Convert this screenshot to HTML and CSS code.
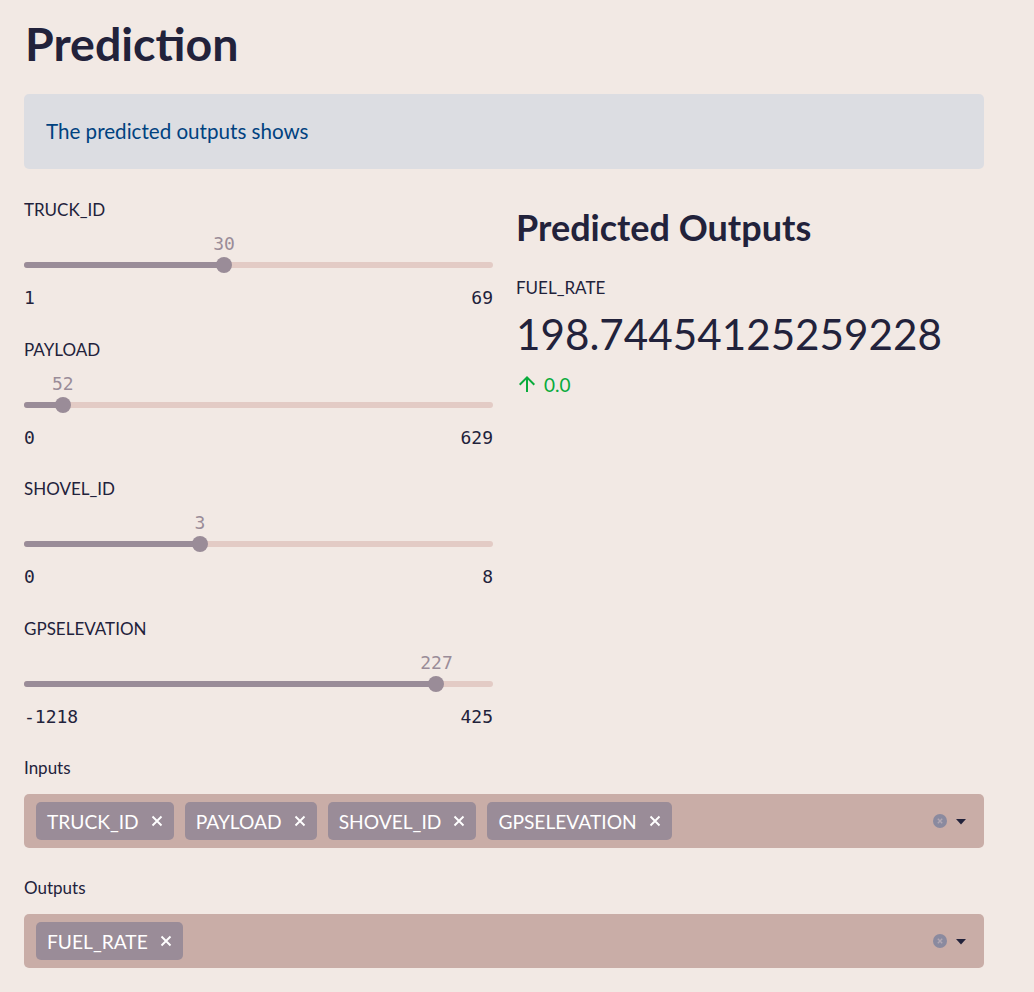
FILE: index.html
```html
<!DOCTYPE html>
<html lang="en">
<head>
<meta charset="utf-8">
<title>Prediction</title>
<link rel="stylesheet" href="styles.css">
</head>
<body>
<main class="main">
  <h1 class="title">Prediction</h1>
  <div class="info">The predicted outputs shows</div>

  <div class="columns">
    <div class="col-left">
      <div class="slider">
        <div class="label">TRUCK_ID</div>
        <div class="track-wrap">
          <div class="track"><div class="fill" style="width:42.65%"></div></div>
          <div class="thumb" style="left:42.65%"></div>
          <div class="value" style="left:42.65%">30</div>
        </div>
        <div class="ticks"><span>1</span><span>69</span></div>
      </div>
      <div class="slider">
        <div class="label">PAYLOAD</div>
        <div class="track-wrap">
          <div class="track"><div class="fill" style="width:8.27%"></div></div>
          <div class="thumb" style="left:8.27%"></div>
          <div class="value" style="left:8.27%">52</div>
        </div>
        <div class="ticks"><span>0</span><span>629</span></div>
      </div>
      <div class="slider">
        <div class="label">SHOVEL_ID</div>
        <div class="track-wrap">
          <div class="track"><div class="fill" style="width:37.5%"></div></div>
          <div class="thumb" style="left:37.5%"></div>
          <div class="value" style="left:37.5%">3</div>
        </div>
        <div class="ticks"><span>0</span><span>8</span></div>
      </div>
      <div class="slider">
        <div class="label">GPSELEVATION</div>
        <div class="track-wrap">
          <div class="track"><div class="fill" style="width:87.95%"></div></div>
          <div class="thumb" style="left:87.95%"></div>
          <div class="value" style="left:87.95%">227</div>
        </div>
        <div class="ticks"><span>-1218</span><span>425</span></div>
      </div>
    </div>

    <div class="col-right">
      <h2 class="subtitle">Predicted Outputs</h2>
      <div class="metric-label">FUEL_RATE</div>
      <div class="metric-value">198.74454125259228</div>
      <div class="metric-delta">
        <svg class="delta-icon" viewBox="0 0 24 24" width="24" height="24"><path d="M4 12l1.41 1.41L11 7.83V20h2V7.83l5.58 5.59L20 12l-8-8-8 8z" fill="currentColor"/></svg>
        <span>0.0</span>
      </div>
    </div>
  </div>

  <div class="field">
    <div class="label">Inputs</div>
    <div class="select">
      <div class="chips">
        <span class="chip">TRUCK_ID<svg class="chip-x" viewBox="0 0 12 12" width="12" height="12"><path d="M1.5 1.5L10.5 10.5M10.5 1.5L1.5 10.5"/></svg></span>
        <span class="chip">PAYLOAD<svg class="chip-x" viewBox="0 0 12 12" width="12" height="12"><path d="M1.5 1.5L10.5 10.5M10.5 1.5L1.5 10.5"/></svg></span>
        <span class="chip">SHOVEL_ID<svg class="chip-x" viewBox="0 0 12 12" width="12" height="12"><path d="M1.5 1.5L10.5 10.5M10.5 1.5L1.5 10.5"/></svg></span>
        <span class="chip">GPSELEVATION<svg class="chip-x" viewBox="0 0 12 12" width="12" height="12"><path d="M1.5 1.5L10.5 10.5M10.5 1.5L1.5 10.5"/></svg></span>
      </div>
      <div class="select-icons">
        <svg class="clear" viewBox="0 0 14 14" width="14" height="14"><circle cx="7" cy="7" r="7" fill="#8a8a9f"/><path d="M4.8 4.8L9.2 9.2M9.2 4.8L4.8 9.2" stroke="#b2a8b3" stroke-width="1.4"/></svg>
        <svg class="caret" viewBox="0 0 10 6" width="10" height="6"><path d="M0 0H10L5 5.5Z" fill="#22223b"/></svg>
      </div>
    </div>
  </div>

  <div class="field">
    <div class="label">Outputs</div>
    <div class="select">
      <div class="chips">
        <span class="chip">FUEL_RATE<svg class="chip-x" viewBox="0 0 12 12" width="12" height="12"><path d="M1.5 1.5L10.5 10.5M10.5 1.5L1.5 10.5"/></svg></span>
      </div>
      <div class="select-icons">
        <svg class="clear" viewBox="0 0 14 14" width="14" height="14"><circle cx="7" cy="7" r="7" fill="#8a8a9f"/><path d="M4.8 4.8L9.2 9.2M9.2 4.8L4.8 9.2" stroke="#b2a8b3" stroke-width="1.4"/></svg>
        <svg class="caret" viewBox="0 0 10 6" width="10" height="6"><path d="M0 0H10L5 5.5Z" fill="#22223b"/></svg>
      </div>
    </div>
  </div>
</main>
</body>
</html>
```
FILE: styles.css
```css
html, body {
  margin: 0;
  padding: 0;
  background: #f2e9e4;
  color: #22223b;
  font-family: Lato, "Noto Sans", sans-serif;
}

.main {
  width: 960px;
  padding: 15px 0 0 24px;
}

.title {
  margin: 0;
  font-size: 46.5px;
  font-weight: 700;
  line-height: 56px;
  padding-left: 1px;
}

.info {
  margin-top: 23px;
  background: #dcdde2;
  border-radius: 5px;
  padding: 20px 22px 20px;
  line-height: 35px;
  font-size: 20.6px;
  color: #004280;
}

.columns {
  display: flex;
  gap: 23px;
  margin-top: 27px;
}

.col-left {
  width: 469px;
  flex: none;
}

.col-right {
  flex: 1;
  padding-top: 9px;
}

.label {
  font-size: 17px;
  line-height: 26px;
  height: 26px;
  padding-top: 1px;
}

.slider {
  height: 139.5px;
}

.track-wrap {
  position: relative;
  height: 63px;
}

.track {
  position: absolute;
  left: 0;
  right: 0;
  top: 39px;
  height: 6px;
  border-radius: 3px;
  background: #e3cbc5;
  overflow: hidden;
}

.fill {
  height: 100%;
  background: #9a8c98;
}

.thumb {
  position: absolute;
  top: 34px;
  width: 16px;
  height: 16px;
  border-radius: 50%;
  background: #9a8c98;
  transform: translateX(-50%);
}

.value {
  position: absolute;
  top: 9px;
  transform: translateX(-50%);
  font-family: "DejaVu Sans Mono", monospace;
  font-size: 18px;
  line-height: 24px;
  color: #9a8c98;
  white-space: nowrap;
}

.ticks {
  display: flex;
  justify-content: space-between;
  font-family: "DejaVu Sans Mono", monospace;
  font-size: 18px;
  line-height: 24px;
  color: #22223b;
}

.subtitle {
  margin: 0;
  font-size: 36px;
  font-weight: 700;
  line-height: 44px;
}

.metric-label {
  margin-top: 26px;
  font-size: 17px;
  line-height: 26px;
}

.metric-value {
  margin-top: 8px;
  font-size: 42.2px;
  line-height: 50px;
}

.metric-delta {
  margin-top: 12px;
  display: flex;
  align-items: center;
  gap: 5px;
  height: 26px;
  font-size: 19px;
  color: #09ab3b;
}

.delta-icon {
  margin-left: -1px;
  width: 24px;
  height: 24px;
}

.field {
  margin-top: 0;
}

.field + .field {
  margin-top: 26px;
}

.field .label {
  margin-bottom: 13px;
}

.select {
  display: flex;
  align-items: center;
  justify-content: space-between;
  background: #c9ada7;
  border-radius: 5px;
  padding: 8px 12px;
  height: 38px;
}

.chips {
  display: flex;
  gap: 11px;
}

.chip {
  display: inline-flex;
  align-items: center;
  gap: 12px;
  height: 38px;
  padding: 0 11px 0 11px;
  background: #9a8c98;
  color: #fff;
  border-radius: 5px;
  font-size: 19.2px;
}

.chip-x {
  width: 12px;
  height: 12px;
  stroke: #fff;
  stroke-width: 1.9;
  fill: none;
}

.select-icons {
  display: flex;
  align-items: center;
  gap: 9px;
  padding-right: 6px;
}

.caret {
  margin-top: 1px;
}
```
